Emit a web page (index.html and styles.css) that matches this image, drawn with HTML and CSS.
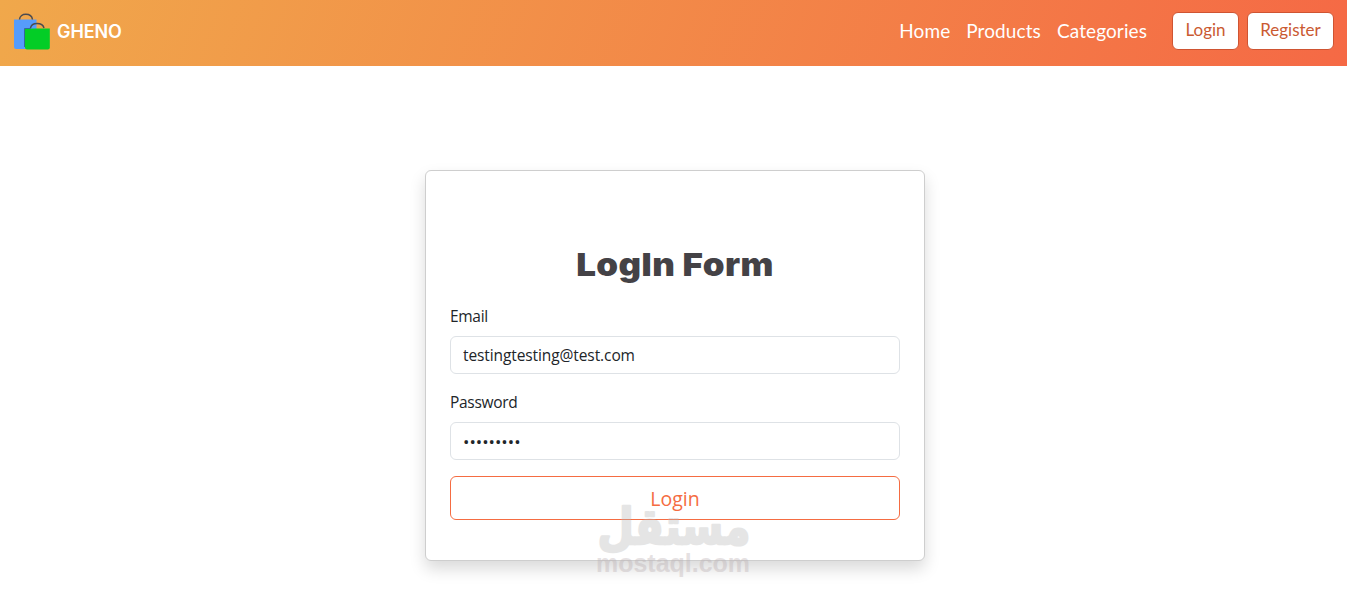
FILE: index.html
```html
<!DOCTYPE html>
<html lang="en">
<head>
    <meta charset="UTF-8">
    <meta name="viewport" content="width=device-width, initial-scale=1.0">
    <title>GHENO - Login</title>
    <link rel="stylesheet" href="styles.css">
</head>
<body>
    <nav class="navbar">
        <a class="brand" href="#">
            <svg class="brand-logo" width="38" height="38" viewBox="0 0 38 38">
                <path d="M1 6.500H23.500V36H3a2 2 0 0 1-2-2z" fill="#569cfb"/>
                <path d="M6.500 6.500c.5-7 12-7 13 0" fill="none" stroke="#4b4b50" stroke-width="1.500"/>
                <path d="M12 15.500h24.800v19a2 2 0 0 1-2 2H14a2 2 0 0 1-2-2z" fill="#03cd26"/>
                <path d="M11.500 34V15.500H18" fill="none" stroke="#326a9c"/>
                <path d="M17.500 15c1-6 12-6 13.500 0" fill="none" stroke="#4b4b50" stroke-width="1.500"/>
            </svg>
            <span class="brand-name">GHENO</span>
        </a>
        <div class="nav-menu">
            <a class="nav-link" href="#">Home</a>
            <a class="nav-link" href="#">Products</a>
            <a class="nav-link categories" href="#">Categories</a>
            <a class="nav-btn" href="#">Login</a>
            <a class="nav-btn register" href="#">Register</a>
        </div>
    </nav>
    <main class="page">
        <form class="card">
            <h1 class="title">LogIn Form</h1>
            <label class="label" for="email">Email</label>
            <input class="input" type="text" id="email" value="testingtesting@test.com">
            <label class="label" for="password">Password</label>
            <input class="input password" type="password" id="password" value="test12345">
            <button class="submit" type="button">Login</button>
            <svg class="watermark" width="160" height="76" viewBox="0 0 160 76">
                <text class="mark-ar" x="81" y="42" text-anchor="middle" textLength="153" lengthAdjust="spacingAndGlyphs">مستقل</text>
                <text class="mark-en" x="3" y="70" textLength="154" lengthAdjust="spacingAndGlyphs">mostaql.com</text>
            </svg>
        </form>
    </main>
</body>
</html>
```

FILE: styles.css
```css
:root {
    --primary: #f56c42;
    --text: #212529;
    --border: #dee2e6;
}
* {
    box-sizing: border-box;
}
body {
    margin: 0;
    height: 589px;
    overflow: hidden;
    background: #fff;
    color: var(--text);
    font-family: "Open Sans", "Noto Sans", sans-serif;
    font-size: 16px;
    line-height: 24px;
}
a {
    text-decoration: none;
}
.navbar {
    display: flex;
    align-items: center;
    justify-content: space-between;
    height: 66px;
    padding: 0 13px 4px 13px;
    background: linear-gradient(110deg, #f0a84b, #f56945);
    font-family: Lato, sans-serif;
}
.brand {
    display: flex;
    align-items: center;
    gap: 6px;
    color: #fff;
}
.brand-logo {
    margin-top: 2px;
}
.brand-name {
    padding-top: 2px;
    font-family: Inter, sans-serif;
    font-size: 18px;
    font-weight: 600;
    letter-spacing: -0.1px;
}
.nav-menu {
    display: flex;
    align-items: center;
}
.nav-link {
    margin-right: 16px;
    color: #fff;
    font-size: 19px;
    letter-spacing: 0.1px;
}
.categories {
    margin-right: 25px;
}
.nav-btn {
    width: 67px;
    height: 38px;
    margin-right: 8px;
    padding-top: 5px;
    border: 1px solid #cf5432;
    border-radius: 6px;
    background: #fff;
    color: #ca5a32;
    font-size: 17px;
    letter-spacing: 0;
    text-align: center;
}
.register {
    width: 87px;
    margin-right: 0;
}
.page {
    padding: 104px 0 0 3px;
}
.card {
    position: relative;
    display: flex;
    flex-direction: column;
    width: 500px;
    height: 391px;
    margin: 0 auto;
    padding: 74px 24px 40px;
    border: 1px solid #cecece;
    border-radius: 6px;
    background: #fff;
    box-shadow: 0 8px 16px rgba(0, 0, 0, 0.15);
}
.title {
    margin: 0 0 19px;
    color: #444246;
    font-family: Inter, sans-serif;
    font-size: 32px;
    font-weight: 900;
    line-height: 40px;
    letter-spacing: 0.4px;
    text-align: center;
    transform: scaleX(1.09);
}
.label {
    margin-bottom: 8px;
    font-size: 15.5px;
    line-height: 24px;
    letter-spacing: -0.3px;
}
.input {
    flex: none;
    width: 100%;
    height: 38px;
    margin-bottom: 16px;
    padding: 6px 12px;
    border: 1px solid var(--border);
    border-radius: 6px;
    color: var(--text);
    font: inherit;
    font-size: 15.5px;
    letter-spacing: -0.1px;
}
.password {
    font-size: 17px;
    letter-spacing: 0;
}
.submit {
    flex: none;
    height: 44px;
    padding: 2px 0 0;
    border: 1px solid var(--primary);
    border-radius: 6px;
    background: #fff;
    color: var(--primary);
    font: inherit;
    font-size: 19.5px;
}
/* site mark lies over the bottom edge of the card */
.watermark {
    position: absolute;
    left: 167px;
    top: 331px;
    overflow: visible;
    fill: #b9b9b9;
    stroke: #b9b9b9;
    opacity: 0.36;
}
.mark-ar {
    font-family: "DejaVu Sans", sans-serif;
    font-size: 50px;
    font-weight: 700;
    stroke-width: 2.5px;
    stroke-linejoin: round;
}
.mark-en {
    font-family: "Liberation Sans", sans-serif;
    font-size: 25px;
    font-weight: 700;
    stroke: none;
    fill: #b9adb0;
}
```
